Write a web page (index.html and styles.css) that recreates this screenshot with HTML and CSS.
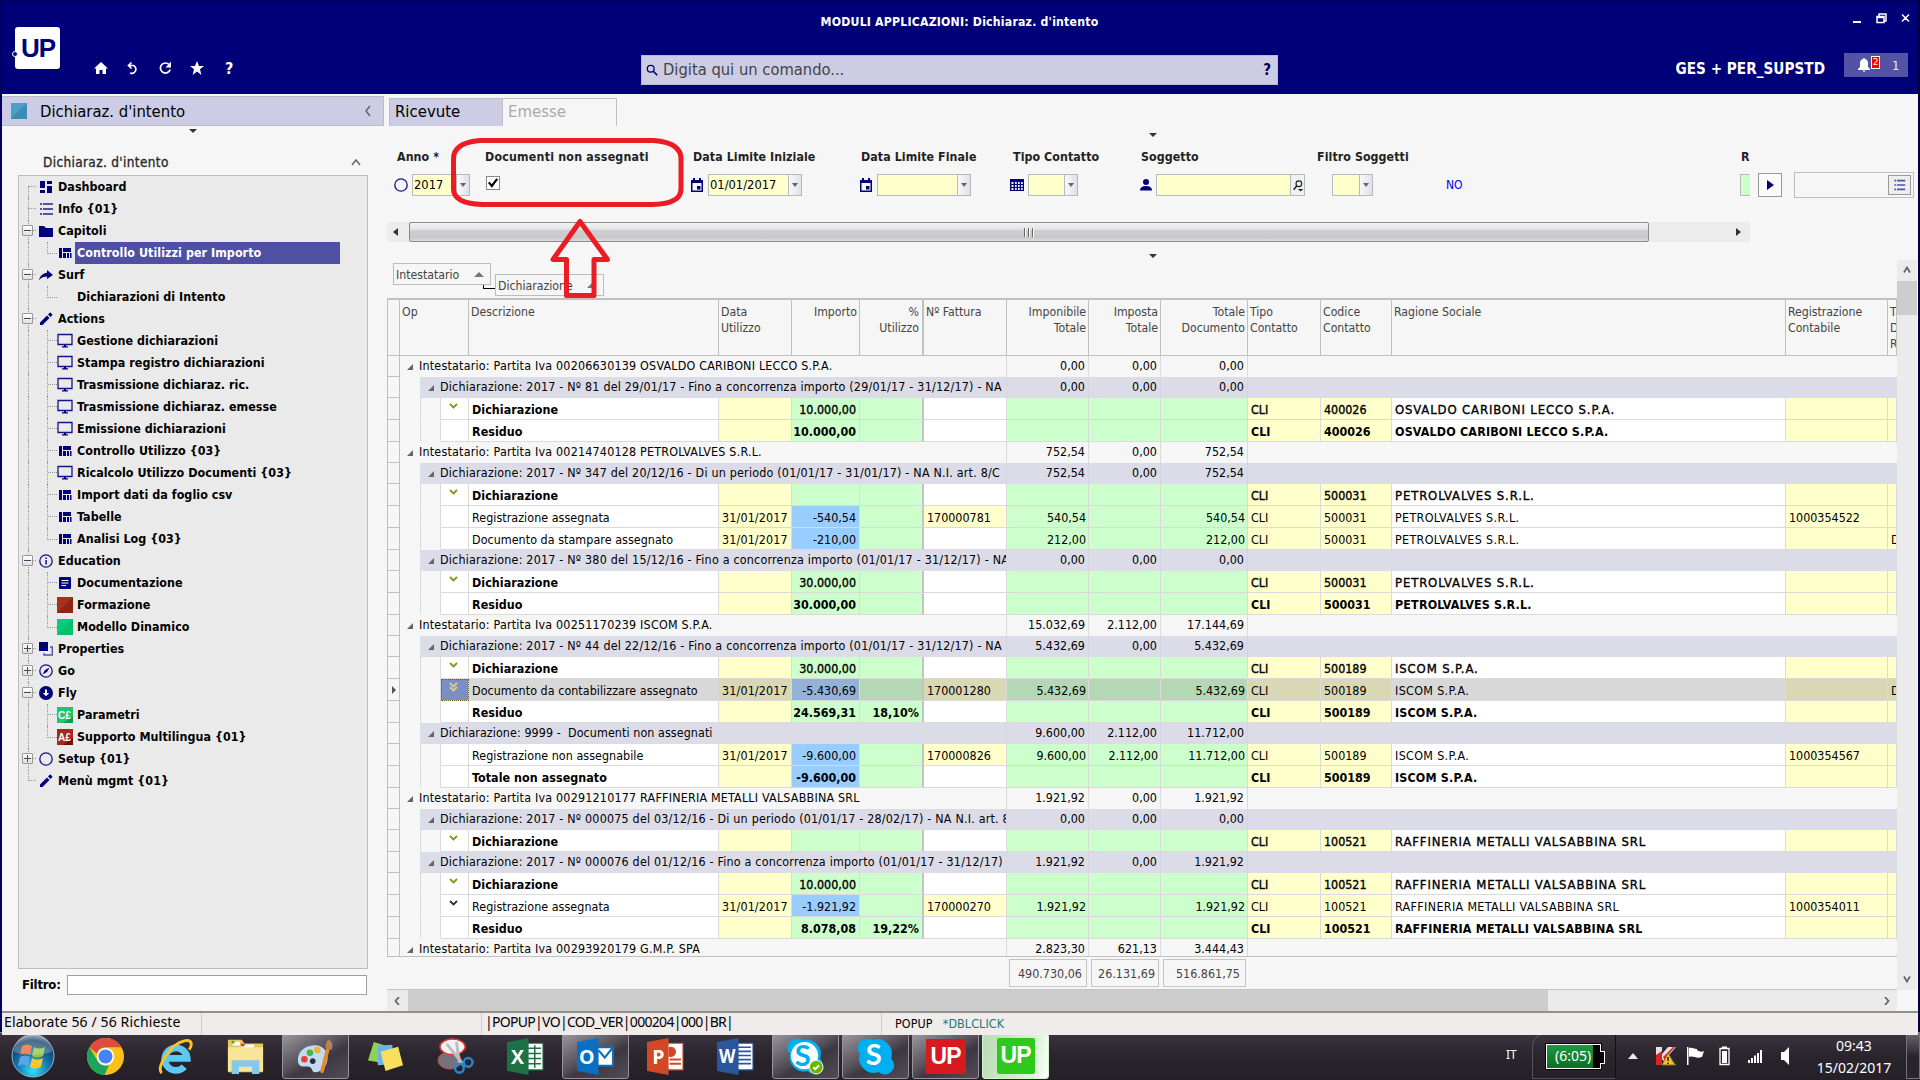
FILE: index.html
```html
<!DOCTYPE html>
<html lang="it">
<head>
<meta charset="utf-8">
<title>MODULI APPLICAZIONI: Dichiaraz. d'intento</title>
<link rel="stylesheet" href="styles.css">
</head>
<body>
<svg class="defs" aria-hidden="true">
  <symbol id="dash" viewBox="0 0 14 14"><path d="M1 1h5v7H1zM1 10h5v3H1zM8 1h5v3H8zM8 6h5v7H8z"/></symbol>
  <symbol id="list" viewBox="0 0 14 14"><path class="soft" d="M1 1h2v2H1zM4 1h10v2H4zM1 6h2v2H1zM4 6h10v2H4zM1 11h2v2H1zM4 11h10v2H4z"/></symbol>
  <symbol id="folder" viewBox="0 0 14 14"><path d="M0 2h5l2 2h7v9H0z"/></symbol>
  <symbol id="grid" viewBox="0 0 14 14"><path d="M1 2h3v10H1zM5 2h8v4H5zM5 7h3v5H5zM9 7h2v5H9zM12 7h1.5v5H12z"/></symbol>
  <symbol id="share" viewBox="0 0 14 14"><path d="M8 2l6 5-6 4V8.500C5 8.500 2 9.500 0 12 1 8 4 5.200 8 4.800z"/></symbol>
  <symbol id="pencil" viewBox="0 0 14 14"><path d="M1 10.500V13h2.500l7-7L8 3.500zM9 2.500L11.500 5l1.700-1.700a.8.8 0 0 0 0-1L11.700.800a.8.8 0 0 0-1 0z"/></symbol>
  <symbol id="screen" viewBox="0 0 16 16"><path fill="none" stroke="#14148a" stroke-width="1.300" d="M1 1.500h14v10H1z"/><path d="M7 12h2v1.500H7zM5 13.200h6V14.500H5z"/></symbol>
  <symbol id="info" viewBox="0 0 14 14"><circle class="ring" cx="7" cy="7" r="6.200"/><path d="M6.400 3.500h1.400V5H6.400zM6.400 6h1.400v4.500H6.400z"/></symbol>
  <symbol id="doc" viewBox="0 0 14 14"><rect x="1" y="1" width="12" height="12" rx="1"/><path stroke="#fff" d="M3.500 4.500h7M3.500 7h7M3.500 9.500h4.500"/></symbol>
  <symbol id="red" viewBox="0 0 16 16"><path fill="#a5331c" d="M0 0h16v16H0z"/><path fill="#8e2411" d="M16 0v16H0z"/></symbol>
  <symbol id="green" viewBox="0 0 16 16"><path fill="#0acb7a" d="M0 0h16v16H0z"/><path fill="#08be6c" d="M16 0v16H0z"/></symbol>
  <symbol id="ce" viewBox="0 0 16 16"><path fill="#27c26b" d="M0 0h16v16H0z"/><path fill="#169c50" d="M16 9v7H6z"/><text class="cur" x="1" y="12">C£</text></symbol>
  <symbol id="ae" viewBox="0 0 16 16"><path fill="#a12b1d" d="M0 0h16v16H0z"/><path fill="#6e1008" d="M16 9v7H6z"/><text class="cur" x="1" y="12">A£</text></symbol>
  <symbol id="props" viewBox="0 0 14 14"><path d="M0 0h9v9H0z"/><path fill="none" stroke="#5353a6" stroke-width="1.400" d="M11 5h2.300v8H5v-2"/></symbol>
  <symbol id="compass" viewBox="0 0 14 14"><circle class="ring" cx="7" cy="7" r="6.200"/><path d="M10.500 3.500L8 8l-4.500 2.500L6 6z"/></symbol>
  <symbol id="fly" viewBox="0 0 14 14"><circle cx="7" cy="7" r="7"/><path fill="#fff" d="M6 3.500h2V7h2.200L7 10.300 3.800 7H6z"/></symbol>
  <symbol id="circle" viewBox="0 0 14 14"><circle class="ring" cx="7" cy="7" r="6.200"/></symbol>
  <symbol id="cal" viewBox="0 0 14 14"><path fill-rule="evenodd" d="M1 2h2V0h2v2h4V0h2v2h2v12H1zM2.500 5v7.500h9V5zM7 8h3.500v3.500H7z"/></symbol>
  <symbol id="table" viewBox="0 0 14 14"><path fill-rule="evenodd" d="M0 1h14v12H0zM1.500 4v2h2V4zM5 4v2h1.700V4zM8 4v2h1.700V4zM11 4v2h1.700V4zM1.500 7v2h2V7zM5 7v2h1.700V7zM8 7v2h1.700V7zM11 7v2h1.700V7zM1.500 10v2h2v-2zM5 10v2h1.700v-2zM8 10v2h1.700v-2zM11 10v2h1.700v-2z"/></symbol>
  <symbol id="user" viewBox="0 0 14 14"><circle cx="7" cy="4" r="3"/><path d="M1 12.500c0-3 2-4.500 6-4.500s6 1.500 6 4.500z"/></symbol>
  <symbol id="lens" viewBox="0 0 14 14"><circle cx="8" cy="5" r="3.300" fill="none" stroke="#222" stroke-width="1.400"/><path stroke="#222" stroke-width="1.800" d="M5.600 7.400L2 12"/><path fill="#222" d="M7 11h6l-3 3z"/></symbol>
</svg>

<div class="app">
  <header class="top">
    <div class="logo">UP<i></i></div>
    <div class="quick">
      <svg viewBox="0 0 14 14"><path d="M7 1l7 6.500h-2V13H8.500V9h-3v4H2V7.500H0z"/></svg>
      <svg viewBox="0 0 14 14"><path class="ln" d="M5.500 1.500L2.500 4.500l3 3M2.500 4.500h5a4 4 0 1 1-3.500 7.500"/></svg>
      <svg viewBox="0 0 14 14"><path class="ln" d="M11 3.500a5 5 0 1 0 1.200 5"/><path d="M13 .5v6H7.500z"/></svg>
      <svg viewBox="0 0 14 14"><path d="M7 0l2 5h5l-4 3.300L11.400 14 7 10.600 2.600 14 4 8.300 0 5h5z"/></svg>
      <b>?</b>
    </div>
    <div class="center">
      <div class="title">MODULI APPLICAZIONI: Dichiaraz. d'intento</div>
      <div class="cmd"><svg viewBox="0 0 14 14"><circle cx="5.500" cy="5.500" r="4" fill="none" stroke="#000066" stroke-width="1.500"/><path stroke="#000066" stroke-width="1.800" d="M8.500 8.500L13 13"/></svg><span>Digita qui un comando...</span><b>?</b></div>
    </div>
    <div class="user">
      <div class="win"><svg viewBox="0 0 58 12"><path fill="#fff" d="M0 8h8v2H0z"/><path class="wl" d="M24 3.500h7v6h-7zM24 4.500h7M26 3V1h7v7h-2M49 1.500l7 7M56 1.500l-7 7"/></svg></div>
      <div class="who"><b>GES + PER_SUPSTD</b><div class="bell"><svg viewBox="0 0 12 14"><path d="M6 0a1 1 0 0 1 1 1c2 .5 3 2 3 4.500V9l2 2v1H0v-1l2-2V5.500C2 3 3 1.500 5 1a1 1 0 0 1 1-1zM4.700 12.500h2.600a1.300 1.300 0 0 1-2.600 0z"/></svg><em>2</em><span>1</span></div></div>
    </div>
  </header>

  <main class="main">
    <aside class="side">
      <div class="sidehead"><i></i><span>Dichiaraz. d'intento</span><svg viewBox="0 0 8 12"><path d="M6 1L2 6l4 5"/></svg></div>
      <div class="notch"></div>
      <div class="treehead"><span>Dichiaraz. d'intento</span><svg viewBox="0 0 10 8"><path d="M1 7l4-5 4 5"/></svg></div>
      <div class="tree" id="tree"></div>
      <div class="filter"><b>Filtro:</b><div></div></div>
    </aside>

    <section class="work">
      <div class="tabs"><div class="on">Ricevute</div><div>Emesse</div></div>
      <div class="upper">
        <div class="tri t1"></div>
        <div class="form">
          <div class="f"><label class="p3">Anno *</label><div class="ctl"><svg class="ic"><use href="#circle"/></svg><div class="inp anno"><span>2017</span><i></i></div></div></div>
          <div class="f"><label class="wide">Documenti non assegnati</label><div class="ctl"><div class="chk"><svg viewBox="0 0 10 10"><path d="M1.500 4.500L4 7.500l4.500-6"/></svg></div></div></div>
          <div class="f"><label class="p3">Data Limite Iniziale</label><div class="ctl"><svg class="ic"><use href="#cal"/></svg><div class="inp date"><span>01/01/2017</span><i></i></div></div></div>
          <div class="f"><label class="p2">Data Limite Finale</label><div class="ctl"><svg class="ic"><use href="#cal"/></svg><div class="inp date"><span></span><i></i></div></div></div>
          <div class="f"><label class="p3">Tipo Contatto</label><div class="ctl"><svg class="ic"><use href="#table"/></svg><div class="inp tipo"><span></span><i></i></div></div></div>
          <div class="f"><label class="p2">Soggetto</label><div class="ctl"><svg class="ic"><use href="#user"/></svg><div class="inp sogg"><span></span><u><svg><use href="#lens"/></svg></u></div></div></div>
          <div class="f"><label>Filtro Soggetti</label><div class="ctl"><div class="inp filt"><span></span><i></i></div></div></div>
          <div class="f"><label></label><div class="ctl no">NO</div></div>
          <div class="f clip"><label class="p1">R</label><div class="ctl"><div class="inp grn"></div></div></div>
          <div class="f"><label></label><div class="ctl"><div class="play"></div></div></div>
          <div class="f"><label></label><div class="ctl"><div class="pick"><div><svg viewBox="0 0 14 14"><use href="#list"/></svg></div></div></div></div>
        </div>
        <div class="hbar"><i class="l"></i><div class="thumb"><s></s></div><i class="r"></i></div>
        <div class="tri t2"></div>
      </div>
      <div class="lower">
        <div class="gridarea">
          <div class="groupby"><div class="gb a">Intestatario<i></i></div><div class="conn"></div><div class="gb b">Dichiarazione<i></i></div></div>
          <div class="tbl" id="tbl"></div>
          <div class="totals"><div class="b1">490.730,06</div><div class="b2">26.131,69</div><div class="b3">516.861,75</div></div>
        </div>
        <div class="vbar"><svg viewBox="0 0 8 8"><path d="M1 6.500l3-5 3 5"/></svg><div></div><svg class="dn" viewBox="0 0 8 8"><path d="M1 1.500l3 5 3-5"/></svg></div>
      </div>
      <div class="hbar2"><div class="bt"><svg viewBox="0 0 8 8"><path d="M6 0L2.500 4 6 8"/></svg></div><div class="th"></div><div class="tr"><svg viewBox="0 0 8 8"><path d="M2 0l3.500 4L2 8"/></svg></div></div>
    </section>
  </main>

  <footer class="status"><div class="s1">Elaborate 56 / 56 Richieste</div><div class="s2"></div><div class="s3">|POPUP|VO|COD_VER|000204|000|BR|</div><div class="s4"><span>POPUP</span><span class="teal">*DBLCLICK</span></div></footer>

  <svg class="marks" viewBox="0 0 240 170"><path d="M33 5.500H207Q234 7.500 234 24V54Q234 69 205 69.500H35Q6.500 68.500 6.500 54V24Q6.500 7.500 33 5.500ZM133 86.500L106 124.500H119.500V160.500H147V124.500H160.500Z"/></svg>
</div>

<div class="task">
  <div class="slot orb"><svg viewBox="0 0 44 44"><defs><radialGradient id="og" cx=".5" cy=".85" r=".9"><stop offset="0" stop-color="#2ee0ff"/><stop offset=".45" stop-color="#1570a8"/><stop offset=".8" stop-color="#123a62"/><stop offset="1" stop-color="#9db4c8"/></radialGradient></defs><circle cx="22" cy="22" r="21" fill="url(#og)" stroke="#86b9d6"/><path fill="#e8622a" d="M11 12q5-3 10 0l-2 9q-5-3-10 0z"/><path fill="#8cc63c" d="M23 13q5 3 11 0l-2 9q-6 3-11 0z"/><path fill="#5aa5e8" d="M9 23q5-3 10 0l-2 9q-5-3-10 0z"/><path fill="#fbc52c" d="M21 24q5 3 11 0l-2 9q-6 3-11 0z"/><path fill="#fff" opacity=".25" d="M3 18a19 19 0 0 1 38 0q-19 6-38 0z"/></svg></div>
  <div class="slot"><svg viewBox="0 0 36 36"><circle cx="18" cy="18" r="18" fill="#fbc117"/><path fill="#de4b3f" d="M2.400 9A18 18 0 0 1 33.600 9H18a9 9 0 0 0-8.500 6z"/><path fill="#1ca45c" d="M2.400 9l8 13.500a9 9 0 0 0 11 4L17 36A18 18 0 0 1 2.400 9z"/><circle cx="18" cy="18" r="8.500" fill="#fff"/><circle cx="18" cy="18" r="6.800" fill="#4285f4"/></svg></div>
  <div class="slot"><svg viewBox="0 0 38 38"><path fill="none" stroke="#5cc8f4" stroke-width="7" d="M9 21h22a11.500 11.500 0 1 0-3 8.500"/><path fill="none" stroke="#f6c428" stroke-width="3" d="M5 36C-2 31 14 6 28 3c9-2 8 5 5 9"/></svg></div>
  <div class="slot"><svg viewBox="0 0 40 38"><path fill="#e9c75c" d="M1 1h15l3 4h20v31H1z"/><path fill="#fff" d="M6 3h8v4H6zM15 6h14v4H15z"/><path fill="#3fae49" d="M5 2h3v3H5z"/><path fill="#e0442e" d="M15 5h4v3h-4z"/><path fill="#f8e598" d="M1 9h38v26H1z"/><path fill="#86c8e8" d="M5 23h30v15h-8v-8H13v8H5z"/></svg></div>
  <div class="slot act"><svg viewBox="0 0 40 38"><path fill="#bfdcf0" d="M17 7c12-1 17 8 16 15-1 8-6 14-14 14-3 0-2-5-6-6S1 32 1 23 7 8 17 7z"/><circle cx="8" cy="22" r="3.500" fill="#e6402e"/><circle cx="14" cy="15" r="3.500" fill="#4bb14b"/><circle cx="22" cy="12" r="3.500" fill="#f3b32a"/><circle cx="17" cy="24" r="3" fill="#332c3a"/><path stroke="#e58a2c" stroke-width="4" stroke-linecap="round" d="M33 12l-6 23"/><path fill="#b98252" d="M31 10C30 4 34 2 33 0c5 2 7 7 4 12z"/></svg></div>
  <div class="slot"><svg viewBox="0 0 38 32"><path fill="#8fd05a" d="M7 1l16 5-5 17-17-3z"/><path fill="#6fb3e4" d="M11 5l15-1 1 20-16 1z"/><path fill="#f9e05c" d="M14 11l18-5 5 19-18 6z"/></svg></div>
  <div class="slot"><svg viewBox="0 0 38 38"><ellipse cx="13" cy="23" rx="12" ry="9" fill="#77727a" stroke="#b44" /><ellipse cx="16" cy="9" rx="13" ry="8" fill="#f2f2f2" stroke="#d33" stroke-width="1.500"/><path stroke="#b9bec4" stroke-width="3" d="M10 6l16 20M20 4l3 22"/><circle cx="23" cy="31" r="4.500" class="ring2"/><circle cx="32" cy="25" r="4.500" class="ring2"/></svg></div>
  <div class="slot"><svg viewBox="0 0 36 36"><path fill="#fff" stroke="#1e7145" d="M19 5h16v26H19z"/><path stroke="#1e7145" stroke-width="1.500" d="M20 10h13M20 15h13M20 20h13M20 25h13M27 7v22"/><path fill="#1e7145" d="M0 4l21-4v36L0 32z"/><text class="off" x="4" y="25">X</text></svg></div>
  <div class="slot act"><svg viewBox="0 0 36 36"><path fill="#fff" stroke="#0a6ec2" stroke-width="2" d="M19 9h16v18H19z"/><path fill="none" stroke="#0a6ec2" stroke-width="2" d="M21 12l6 7 8-10"/><path fill="#0a6ec2" d="M0 4l21-4v36L0 32z"/><text class="off" x="2" y="25">O</text></svg></div>
  <div class="slot"><svg viewBox="0 0 36 36"><path fill="#fff" stroke="#d24726" d="M19 5h16v26H19z"/><path stroke="#d24726" stroke-width="2" d="M22 21h11M22 25h11"/><path fill="#d24726" d="M21 9a5 5 0 1 1 0 9z"/><path fill="#d24726" d="M0 4l21-4v36L0 32z"/><text class="off" x="5" y="25">P</text></svg></div>
  <div class="slot"><svg viewBox="0 0 36 36"><path fill="#fff" stroke="#2b579a" d="M19 5h16v26H19z"/><path stroke="#2b579a" stroke-width="1.600" d="M20 9h13M20 13h13M20 17h13M20 21h13M20 25h13"/><path fill="#2b579a" d="M0 4l21-4v36L0 32z"/><text class="off" x="2" y="24" textLength="16" lengthAdjust="spacingAndGlyphs">W</text></svg></div>
  <div class="slot act"><svg viewBox="0 0 38 38"><path class="sk" fill="#00aff0" d="M10 1a9 9 0 0 1 6 1A15 15 0 0 1 34 21a9 9 0 0 1-13 13A15 15 0 0 1 3 16 9 9 0 0 1 10 1z"/><circle cx="18" cy="18" r="14" fill="#fff"/><text class="skc" x="8" y="29">S</text><circle cx="30" cy="30" r="7" fill="#6bb700" stroke="#fff"/><path fill="none" stroke="#fff" stroke-width="2" d="M27 30l2 2 4-4"/></svg></div>
  <div class="slot act"><svg viewBox="0 0 38 38"><path fill="#00aff0" d="M10 1a9 9 0 0 1 6 1A15 15 0 0 1 35 21a9 9 0 0 1-13 14A15 15 0 0 1 3 16 9 9 0 0 1 10 1z"/><text class="skw" x="9" y="28">S</text></svg></div>
  <div class="slot act"><div class="up r">UP</div></div>
  <div class="slot act lit"><div class="up g">UP</div></div>
  <div class="tray">
    <span class="it">IT</span>
    <div class="batbox"><div class="bat">(6:05)</div></div>
    <svg class="trayic" viewBox="1620 1040 180 34">
      <path fill="#e8e8f4" d="M1628 1060l5-6 5 6z"/>
      <path fill="#e8e0e0" d="M1656 1048h6v7l6-7h8l-8 9 8 9h-9l-5-6v6h-6z"/><path fill="#d22" d="M1656 1056l6-4v14h-6zM1663 1058l10-10h2l-9 10 7 8h-6z"/><path fill="#f4c332" stroke="#8a6a10" d="M1668 1054l7 12h-13z"/><path stroke="#222" stroke-width="1.500" d="M1668 1058v4M1668 1063.500v1.500"/>
      <path fill="#fff" d="M1687 1048h1.500v18h-1.500zM1689 1049c4-1 5 1 8 1v1c3 2 5 2 7 1l-2 6c-3 1-5 1-7 0-2 0-3-1-6 0z"/>
      <path fill="none" stroke="#fff" stroke-width="1.300" d="M1720 1049.500h9v16h-9z"/><path fill="#fff" d="M1722 1047.500h5v2h-5zM1722 1052h5v12h-5z"/>
      <path fill="#fff" d="M1748 1061h2v3h-2zM1751 1059h2v5h-2zM1754 1056.500h2v7.500h-2zM1757 1054h2v10h-2zM1760 1051h2v13h-2z"/>
      <path fill="#fff" d="M1781 1053h3l5-5v18l-5-5h-3z"/>
    </svg>
    <div class="clock"><span>09:43</span><span>15/02/2017</span></div>
    <div class="desk"></div>
  </div>
</div>
<script src="app.js"></script>
</body>
</html>
```
FILE: styles.css
```css
* { box-sizing: border-box; }
body { margin: 0; width: 1920px; height: 1080px; overflow: hidden; font: 12.4px "DejaVu Sans Condensed", "DejaVu Sans", sans-serif; font-stretch: condensed; color: #000; background: #f6f6f6; }
svg { display: block; fill: #000078; }
.defs { position: absolute; width: 0; height: 0; }
.soft { fill: #5353a6; }
.ring { fill: none; stroke: #14148a; stroke-width: 1.3; }
.cur { font: bold 10px "Liberation Sans", sans-serif; fill: #fff; }
.app { position: relative; display: flex; flex-direction: column; width: 1920px; height: 1032px; border-left: 2px solid #000060; border-right: 2px solid #000040; border-bottom: 2px solid #000060; }

/* top bar */
.top { height: 94px; flex: none; display: flex; background: #000078; border-top: 2px solid #000060; color: #fff; }
.top svg { fill: #fff; }
.logo { position: relative; margin: 25px 0 0 13px; width: 45px; height: 42px; border-radius: 3px; background: #fff; color: #000078; font: bold 26px/42px "Liberation Sans", sans-serif; letter-spacing: -1px; padding-left: 6px; }
.logo i { position: absolute; left: -3px; top: 24px; width: 6px; height: 6px; border-radius: 50%; background: #000078; border: 1.5px solid #fff; }
.quick { display: flex; align-items: center; gap: 18px; margin: 59px 0 0 34px; width: 145px; height: 14px; }
.quick svg { width: 14px; height: 14px; flex: none; }
.quick b { font-size: 16px; margin-left: 3px; }
.ln { fill: none; stroke: #fff; stroke-width: 1.7; }
.center { margin-left: 402px; width: 637px; display: flex; flex-direction: column; align-items: center; }
.title { margin-top: 11px; height: 18px; font-weight: bold; font-size: 12.2px; line-height: 18px; white-space: nowrap; letter-spacing: .2px; }
.cmd { margin-top: 24px; width: 637px; height: 30px; background: #cccce4; border: 1px solid #b8b8d8; color: #444; display: flex; align-items: center; font-size: 16.4px; line-height: 26px; padding: 0 6px 0 4px; }
.cmd svg { width: 12px; height: 12px; margin-right: 5px; }
.cmd b { margin-left: auto; color: #000050; font-size: 15px; }
.user { flex: 1; display: flex; flex-direction: column; align-items: flex-end; padding-right: 10px; }
.win { margin: 11px -3px 0 0; }
.win svg { width: 58px; height: 12px; }
.wl { fill: none; stroke: #fff; stroke-width: 1.5; }
.who { display: flex; align-items: center; gap: 19px; margin-top: 28px; font-size: 15.2px; height: 24px; }
.who > b { padding-top: 7px; }
.bell { width: 64px; height: 24px; background: #5353a6; display: flex; align-items: center; padding-left: 14px; font-size: 13px; }
.bell svg { width: 12px; height: 14px; }
.bell em { font: 9px/11px "DejaVu Sans", sans-serif; width: 9px; height: 13px; margin: -6px 0 0 1px; text-align: center; background: #f00; border: 1px solid #fff; }
.bell span { margin-left: 12px; color: #e8e8ff; }

/* side panel */
.main { height: 917px; flex: none; display: flex; background: #f6f6f6; }
.side { width: 385px; flex: none; display: flex; flex-direction: column; }
.sidehead { margin-top: 2px; width: 382px; height: 30px; background: #cccce4; border: 1px solid #bcbcc4; border-left: 0; display: flex; align-items: center; font-size: 16.5px; padding: 0 11px 0 9px; }
.sidehead i { width: 16px; height: 16px; background: linear-gradient(135deg, #4aa0c8 50%, #3c8cb8 50%); margin-right: 13px; }
.sidehead svg { width: 8px; height: 12px; margin-left: auto; }
.sidehead path, .treehead path { fill: none; stroke: #666; stroke-width: 1.5; }
.notch, .tri { border: 4px solid transparent; border-top-color: #333; border-bottom: 0; width: 8px; height: 4px; }
.notch { margin: 3px 0 0 187px; }
.treehead { margin: 19px 0 0 41px; height: 20px; display: flex; align-items: center; width: 318px; font-size: 13.5px; color: #222; -webkit-text-stroke: .3px #333; justify-content: space-between; letter-spacing: .35px; }
.treehead svg { width: 10px; height: 8px; }
.tree { margin: 3px 0 0 16px; width: 350px; height: 794px; background: #eaeaea; border: 1px solid #bcbcbc; }
.node { position: relative; height: 22px; display: flex; align-items: center; font-weight: bold; font-size: 12.4px; white-space: nowrap; letter-spacing: .05px; }
.node svg { width: 14px; height: 14px; flex: none; }
.node.l1 { padding-left: 20px; }
.node.l1 span { margin-left: 4px; }
.node.l2 { padding-left: 38px; }
.node.l2 svg { width: 16px; height: 16px; }
.node.l2 svg.sm { width: 14px; height: 14px; margin: 0 1px; }
.node span { padding: 0 1px; line-height: 22px; }
.node.l2 span { margin-left: 3px; }
.node.sel span { background: #4f4fa3; color: #fff; width: 265px; margin-left: 2px; padding-left: 2px; }
.node::before { content: ""; position: absolute; left: 9px; top: 0; width: 0; height: 22px; border-left: 1px dotted #999; }
.node.first::before { top: 10px; height: 12px; }
.node.end::before { height: 11px; }
.node.l1::after { content: ""; position: absolute; left: 9px; top: 10px; width: 8px; border-top: 1px dotted #999; }
.node.l2::after { content: ""; position: absolute; left: 28px; top: 0; width: 9px; height: 11px; border-left: 1px dotted #999; border-bottom: 1px dotted #999; }
.node.l2.more::after { height: 22px; border-bottom: 0; background: repeating-linear-gradient(90deg, #999 0 1px, transparent 1px 2px) 0 10px / 9px 1px no-repeat; }
.node i { position: absolute; z-index: 1; left: 3px; top: 5px; width: 11px; height: 11px; border: 1px solid #999; border-radius: 1px; background: linear-gradient(#446, #446) 50% 50% / 7px 1px no-repeat, linear-gradient(#fff, #e0e0e0); }
.node i.plus { background: linear-gradient(#446, #446) 50% 50% / 7px 1px no-repeat, linear-gradient(#446, #446) 50% 50% / 1px 7px no-repeat, linear-gradient(#fff, #e0e0e0); }
.filter { margin: 5px 0 0 20px; display: flex; align-items: center; height: 21px; font-size: 13px; }
.filter b { width: 45px; white-space: nowrap; letter-spacing: -.2px; }
.filter div { width: 300px; height: 20px; background: #fff; border: 1px solid #a0a0a0; }

/* work area */
.work { flex: 1; display: flex; flex-direction: column; min-width: 0; }
.tabs { display: flex; height: 32px; padding: 4px 0 0 2px; font-size: 16.6px; }
.tabs div { width: 115px; height: 28px; border: 1px solid #c0c0c0; border-bottom: 0; padding: 0 5px; line-height: 26px; color: #aaa; }
.tabs .on { width: 114px; margin-right: -1px; background: #cccce4; color: #000; }
.upper { height: 134px; flex: none; }
.tri { margin-left: 762px; }
.t1 { margin-top: 7px; }
.form { margin: 10px 0 0 7px; height: 62px; display: grid; grid-template-columns: 91px 205px 169px 151px 129px 178px 129px 294px 18px 36px 120px; }
.f label { display: block; height: 25px; line-height: 17px; padding-top: 2px; font-weight: bold; font-size: 12.3px; color: #222; white-space: nowrap; letter-spacing: .08px; }
.f label.wide { letter-spacing: .22px; }
.p1 { padding-left: 1px; } .p2 { padding-left: 2px; } .p3 { padding-left: 3px; }
.clip { width: 10px; overflow: hidden; }
.ctl { display: flex; align-items: center; height: 26px; }
.ic { width: 14px; height: 14px; margin-right: 4px; flex: none; }
.inp { height: 22px; display: flex; background: #ffffcc; border: 1px solid #b8b8b8; }
.inp span { flex: 1; padding-left: 1px; line-height: 20px; font-size: 12.8px; }
.inp i { width: 13px; border-left: 1px solid #b8b8b8; background: linear-gradient(90deg, #f8f8fb, #dde2ea); display: grid; place-items: center; }
.inp i::after { content: ""; border: 3px solid transparent; border-top: 4px solid #666; border-bottom: 0; }
.inp u { width: 14px; border-left: 1px solid #b8b8b8; background: #eef0f4; display: grid; place-items: center; }
.inp u svg { width: 12px; height: 15px; }
.anno { width: 58px; } .date { width: 94px; } .tipo { width: 50px; } .sogg { width: 149px; margin-left: -1px; } .filt { width: 41px; margin-left: 15px; }
.grn { width: 40px; background: #ccffcc; flex: none; }
.chk { width: 14px; height: 14px; margin: -4px 0 0 1px; background: #fff; border: 1px solid #888; }
.chk path { fill: none; stroke: #000; stroke-width: 1.8; }
.no { color: #0000ff; font-size: 12px; }
.play { width: 24px; height: 24px; border: 1px solid #999; background: #fafafa; display: grid; place-items: center; }
.play::after { content: ""; border: 5px solid transparent; border-left: 7px solid #000078; border-right: 0; }
.pick { width: 120px; height: 26px; border: 1px solid #c0c0c0; display: flex; justify-content: flex-end; padding: 2px; }
.pick div { width: 23px; height: 20px; border: 1px solid #999; background: #eee; display: grid; place-items: center; }
.pick svg { width: 13px; height: 12px; }
.hbar { margin-top: 13px; width: 1363px; height: 20px; background: #ececec; display: flex; align-items: center; }
.hbar i { border: 4px solid transparent; }
.hbar .l { margin: 0 11px 0 2px; border-right: 5px solid #333; }
.hbar .r { margin-left: 87px; border-left: 5px solid #333; }
.thumb { width: 1240px; height: 20px; border: 1px solid #8c8c8c; border-radius: 2px; background: linear-gradient(#f2f2f2, #e4e4e4 35%, #d0d0d4 40%, #c8c8cc 80%, #dcdcdc); display: grid; place-items: center; }
.thumb s { width: 11px; height: 9px; background: repeating-linear-gradient(90deg, #666 0 1px, #fff 1px 2px, transparent 2px 4px); }
.t2 { margin-top: 12px; }
.lower { height: 729px; flex: none; display: flex; }
.gridarea { width: 1510px; flex: none; }
.groupby { height: 38px; display: flex; padding-left: 6px; color: #444; font-size: 12.2px; }
.gb { height: 22px; border: 1px solid #bbb; display: flex; align-items: center; justify-content: space-between; padding: 1px 6px 0 2px; }
.gb i { border: 5px solid transparent; border-bottom: 5px solid #777; border-top: 0; }
.a { width: 98px; margin-top: 3px; }
.b { width: 109px; margin-top: 14px; }
.conn { width: 12px; height: 4px; margin: 25px 0 0 -8px; border-left: 1px solid #000; border-bottom: 1px solid #000; }

/* data grid */
.tbl { width: 1510px; height: 659px; overflow: hidden; border-top: 2px solid #c0c0c0; border-bottom: 1px solid #c0c0c0; }
.row { display: grid; grid-template-columns: 13px 20px 21px 28px 250px 73px 68px 64px 83px 82px 72px 87px 73px 71px 394px 102px 9px; height: 22px; line-height: 24px; white-space: nowrap; }
.row > div { overflow: hidden; border-right: 1px solid #dadada; border-bottom: 1px solid #dadada; padding: 0 2px 0 3px; min-width: 0; }
.row > .ind { border-left: 1px solid #c0c0c0; border-right-color: #c0c0c0; border-bottom-color: #c0c0c0; background: #f6f6f6; padding: 0; display: grid; place-items: center; }
.row > .pad { background: #f6f6f6; border-bottom-color: #f6f6f6; border-right-color: #f6f6f6; }
.row > .pad + .pad { border-left: 1px solid #dadada; border-right-color: #dadada; }
.row > .pct { border-right: 2px solid #c4c4c4; padding-right: 3px; }
.row > .num { text-align: right; }
.row > .imp { padding: 0 3px 0 0; }
.row.hd { height: 56px; line-height: 16px; color: #444; font-size: 12.2px; }
.row.hd > div { border-color: #c0c0c0; padding: 4px 2px 0; white-space: pre; }
.row.hd > .op { grid-column: 2 / 5; }
.row.hd > .pct { padding-right: 3px; }
.row.g1, .row.g2 { height: 21px; line-height: 20px; }
.row.g1 > div, .row.g2 > div { border-bottom-color: transparent; }
.row.g1 > .ind, .row.g2 > .ind { border-bottom-color: #c0c0c0; }
.row > .cap { padding-right: 0; }
.row.g1 > .cap { grid-column: 2 / 10; padding-left: 7px; letter-spacing: .21px; }
.row.g2 > .cap { grid-column: 3 / 10; padding-left: 8px; background: #dcdce8; border-right-color: #d6d6e2; letter-spacing: .21px; }
.row.g2 > .cap.few { letter-spacing: .08px; }
.row.g2 > .sum { background: #dcdce8; border-right-color: #d4d4e0; }
.row > .rest { grid-column: 13 / 18; border-right: 0; }
.g2 .rest { background: #dcdce8; }
.row.g2 > .pad { border-right: 0; }
.cap::before { content: ""; display: inline-block; border-left: 6px solid transparent; border-bottom: 6px solid #666; margin-right: 6px; }
.row > .sum { text-align: right; letter-spacing: .03px; padding-right: 3px; }
.row > .w { background: #fff; } .row > .y { background: #ffffcc; } .row > .g { background: #ccffcc; } .row > .bl { background: #99ccff; }
.row > .ds { letter-spacing: .05px; }
.row > .dt { letter-spacing: .15px; }
.row > .rs { letter-spacing: .35px; }
.bold { font-weight: bold; }
.semi > div { -webkit-text-stroke: .35px #000; }
.semi > .ds { -webkit-text-stroke: 0; font-weight: bold; }
.row.semi > .rs { letter-spacing: .85px; font-size: 13px; }
.semi > .imp { font-size: 12.4px; }
.row.bold > .rs { letter-spacing: .17px; }
.row > .opc { padding: 0; }
.opc svg { width: 9px; height: 6px; margin: 5px auto 0; position: relative; left: -1px; fill: none; stroke: #8f8f1e; stroke-width: 1.8; overflow: visible; }
.opc.dark svg { stroke: #333; }
.row.hl > .w { background: #d8d8d8; } .row.hl > .y { background: #d8d8b4; } .row.hl > .g { background: #b4d8b4; } .row.hl > .bl { background: #92b2d8; }
.row.hl > .opc { background: #7b8fc4; outline: 1px dotted #66602a; outline-offset: -1px; }
.hl .opc svg { stroke: #d8cf90; margin-top: 7px; }
.hl .ind::after { content: ""; border: 4px solid transparent; border-left: 4px solid #555; border-right: 0; }
.totals { display: flex; padding: 2px 0 0 622px; gap: 4px; }
.totals div { height: 28px; border: 1px solid #c4c4c4; text-align: right; line-height: 27px; padding-right: 5px; color: #444; letter-spacing: .03px; }
.totals .b1 { width: 78px; padding-right: 4px; } .totals .b2 { width: 68px; padding: 0 3px 0 0; } .totals .b3 { width: 83px; }
.vbar { width: 20px; background: #ebebeb; height: 730px; display: flex; flex-direction: column; align-items: center; }
.vbar svg { width: 8px; height: 8px; margin: 6px 0 7px; }
.vbar path, .hbar2 path { fill: none; stroke: #666; stroke-width: 1.8; }
.vbar div { width: 20px; height: 34px; background: #cdcdcd; }
.vbar .dn { margin-top: auto; }
.hbar2 { height: 22px; display: flex; width: 1510px; border-top: 1px solid #c4c4c4; }
.hbar2 div { display: flex; align-items: center; }
.hbar2 svg { width: 8px; height: 8px; }
.bt { width: 21px; background: #ebebeb; justify-content: center; padding-right: 2px; }
.th { width: 1140px; background: #cdcdcd; }
.tr { flex: 1; background: #ebebeb; justify-content: flex-end; padding-right: 6px; }

/* status bar */
.status { flex: 1; display: flex; border-top: 2px solid #909090; background: #f0eceb; font-size: 14px; line-height: 17px; white-space: nowrap; font-family: "Noto Sans", sans-serif; }
.status div { border-right: 1px solid #ccc; padding-left: 2px; overflow: hidden; letter-spacing: .12px; }
.s1 { width: 200px; } .s2 { width: 280px; } .s3 { width: 400px; } .s4 { flex: 1; display: flex; gap: 10px; }
.status .s3 { padding-left: 3px; letter-spacing: -.7px; }
.status .s4 { padding-left: 13px; border: 0; font: 12.4px/22px "DejaVu Sans Condensed", sans-serif; }
.teal { color: #1a7a76; }

/* drawn annotation */
.marks { position: absolute; left: 445px; top: 135px; width: 240px; height: 170px; }
.marks path { fill: none; stroke: #ed1c24; stroke-width: 5; stroke-linejoin: round; }

/* task bar */
.task { height: 48px; display: flex; background: linear-gradient(#7a7a80 0 1px, #3b343e 2px, #2a242d 50%, #251f28); color: #fff; font-family: "Noto Sans", sans-serif; }
.slot { width: 67px; margin: 1px 1px 1px 2px; height: 46px; display: grid; place-items: center; flex: none; border-radius: 3px; }
.slot svg { width: 37px; height: 37px; }
.slot.orb { margin: 1px 4px 1px 0; width: 66px; }
.slot.orb svg { width: 44px; height: 44px; }
.act { border: 1px solid #98949c; background: linear-gradient(150deg, #9a979e, #57525b 45%, #3d3741 60%, #524c56); }
.lit { border-color: #d6f5d0; background: linear-gradient(100deg, #b8dcb4, #e2f4de 80%, #fff); }
.off { font: bold 19px "Open Sans", sans-serif; fill: #fff; }
.skc, .skw { font: bold 30px "Lato", sans-serif; fill: #00aff0; }
.skw { fill: #fff; }
.ring2 { fill: none; stroke: #2a86d2; stroke-width: 2.5; }
.up { font: bold 23px/35px "Liberation Sans", sans-serif; text-align: center; letter-spacing: -1px; }
.up.r { width: 40px; height: 35px; background: #d71920; }
.up.g { width: 38px; height: 36px; background: #2fc81c; border-radius: 2px; }
.tray { margin-left: auto; display: flex; align-items: center; }
.it { font-size: 12px; width: 26px; margin-top: -4px; }
.batbox { width: 84px; height: 46px; border: 1px solid #58525c; border-right-color: #111; border-radius: 14px 0 0 0; padding: 10px 0 0 13px; }
.bat { position: relative; width: 55px; height: 25px; border: 1px solid #fff; outline: 1px solid #000; background: linear-gradient(90deg, transparent 46px, #000 46px), linear-gradient(#1f9a40, #0a6e28); font-size: 14px; line-height: 22px; padding-left: 8px; }
.bat::after { content: ""; position: absolute; left: 53px; top: 6px; width: 4px; height: 11px; background: #000; border: 1px solid #fff; border-left: 0; }
.trayic { width: 180px; height: 34px; margin-left: 4px; }
.clock { width: 108px; display: flex; flex-direction: column; text-align: center; font-size: 14px; line-height: 22px; margin-top: 2px; }
.desk { width: 14px; height: 46px; margin-left: -2px; border: 1px solid #77727a; background: linear-gradient(#6a656d, #2a242d 50%); }
```
FILE: app.js
```js
// Menu tree: level, icon, label, flag (+ collapsed, - expanded)
const nodes = [
  [1,'dash','Dashboard'],[1,'list','Info {01}'],[1,'folder','Capitoli','-'],[2,'grid','Controllo Utilizzi per Importo'],
  [1,'share','Surf','-'],[2,'','Dichiarazioni di Intento'],[1,'pencil','Actions','-'],
  [2,'screen','Gestione dichiarazioni'],[2,'screen','Stampa registro dichiarazioni'],[2,'screen','Trasmissione dichiaraz. ric.'],
  [2,'screen','Trasmissione dichiaraz. emesse'],[2,'screen','Emissione dichiarazioni'],[2,'grid','Controllo Utilizzo {03}'],
  [2,'screen','Ricalcolo Utilizzo Documenti {03}'],[2,'grid','Import dati da foglio csv'],[2,'grid','Tabelle'],[2,'grid','Analisi Log {03}'],
  [1,'info','Education','-'],[2,'doc','Documentazione'],[2,'red','Formazione'],[2,'green','Modello Dinamico'],
  [1,'props','Properties','+'],[1,'compass','Go','+'],[1,'fly','Fly','-'],[2,'ce','Parametri'],[2,'ae','Supporto Multilingua {01}'],
  [1,'circle','Setup {01}','+'],[1,'pencil','Menù mgmt {01}']
];
document.getElementById('tree').innerHTML = nodes.map(([lv, icon, text, flag], i) => {
  const next = nodes[i + 1];
  const cls = ['node', 'l' + lv];
  if (i === 0) cls.push('first');
  if (!next) cls.push('end');
  if (i === 3) cls.push('sel');
  if (lv === 2 && next && next[0] === 2) cls.push('more');
  const box = flag ? `<i class="${flag === '+' ? 'plus' : ''}"></i>` : '';
  const small = icon === 'grid' || icon === 'doc' ? 'sm' : '';
  return `<div class="${cls.join(' ')}">${box}<svg class="${small}">${icon ? `<use href="#${icon}"/>` : ''}</svg><span>${text}</span></div>`;
}).join('');

const G1 = (text, a, b, c) => `<div class="row g1"><div class="ind"></div><div class="cap">Intestatario: Partita Iva ${text}</div><div class="sum">${a}</div><div class="sum">${b}</div><div class="sum">${c}</div><div class="rest"></div></div>`;
const G2 = (text, a, b, c) => `<div class="row g2"><div class="ind"></div><div class="pad"></div><div class="cap ${text.length < 50 ? 'few' : ''}">Dichiarazione: ${text}</div><div class="sum">${a}</div><div class="sum">${b}</div><div class="sum">${c}</div><div class="rest"></div></div>`;
// Detail row; o holds the optional cell values
const D = (kind, mark, desc, code, name, o = {}) => {
  const v = k => o[k] || '';
  const arrow = mark ? `<svg viewBox="0 0 9 6"><path d="M1 1l3.500 3.500L8 1${mark === 'two' ? 'M1 -3l3.500 3.500L8 -3' : ''}"/></svg>` : '';
  return `<div class="row ${kind}"><div class="ind"></div><div class="pad"></div><div class="pad"></div>` +
    `<div class="w opc ${mark === 'dark' ? 'dark' : ''}">${arrow}</div><div class="w ds">${desc}</div><div class="y dt">${v('d')}</div>` +
    `<div class="${v('i').startsWith('-') ? 'bl' : 'g'} num imp">${v('i')}</div><div class="g num pct">${v('p')}</div>` +
    `<div class="${o.n ? 'y' : 'w'}">${v('n')}</div><div class="g num">${v('a')}</div><div class="g num">${v('b')}</div><div class="g num">${v('c')}</div>` +
    `<div class="y">CLI</div><div class="y">${code}</div><div class="w rs">${name}</div><div class="y">${v('r')}</div><div class="y">${v('t')}</div></div>`;
};
const J = '31/01/2017', OS = 'OSVALDO CARIBONI LECCO S.P.A.', PE = 'PETROLVALVES S.R.L.', IS = 'ISCOM S.P.A.', RA = 'RAFFINERIA METALLI VALSABBINA SRL';
const head = `<div class="row hd"><div class="ind"></div><div class="op">Op</div><div>Descrizione</div><div>Data
Utilizzo</div><div class="num">Importo</div><div class="num pct">%
Utilizzo</div><div>Nº Fattura</div><div class="num">Imponibile
Totale</div><div class="num">Imposta
Totale</div><div class="num">Totale
Documento</div><div>Tipo
Contatto</div><div>Codice
Contatto</div><div>Ragione Sociale</div><div>Registrazione
Contabile</div><div>T
D
R</div></div>`;
document.getElementById('tbl').innerHTML = [
  head,
  G1('00206630139 ' + OS, '0,00', '0,00', '0,00'),
  G2('2017 - Nº 81 del 29/01/17 - Fino a concorrenza importo (29/01/17 - 31/12/17) - NA', '0,00', '0,00', '0,00'),
  D('semi', 'y', 'Dichiarazione', '400026', OS, { i: '10.000,00' }),
  D('bold', '', 'Residuo', '400026', OS, { i: '10.000,00' }),
  G1('00214740128 PETROLVALVES S.R.L.', '752,54', '0,00', '752,54'),
  G2('2017 - Nº 347 del 20/12/16 - Di un periodo (01/01/17 - 31/01/17) - NA N.I. art. 8/C', '752,54', '0,00', '752,54'),
  D('semi', 'y', 'Dichiarazione', '500031', PE),
  D('', '', 'Registrazione assegnata', '500031', PE, { d: J, i: '-540,54', n: '170000781', a: '540,54', c: '540,54', r: '1000354522' }),
  D('', '', 'Documento da stampare assegnato', '500031', PE, { d: J, i: '-210,00', a: '212,00', c: '212,00', t: 'D' }),
  G2('2017 - Nº 380 del 15/12/16 - Fino a concorrenza importo (01/01/17 - 31/12/17) - NA', '0,00', '0,00', '0,00'),
  D('semi', 'y', 'Dichiarazione', '500031', PE, { i: '30.000,00' }),
  D('bold', '', 'Residuo', '500031', PE, { i: '30.000,00' }),
  G1('00251170239 ISCOM S.P.A.', '15.032,69', '2.112,00', '17.144,69'),
  G2('2017 - Nº 44 del 22/12/16 - Fino a concorrenza importo (01/01/17 - 31/12/17) - NA', '5.432,69', '0,00', '5.432,69'),
  D('semi', 'y', 'Dichiarazione', '500189', IS, { i: '30.000,00' }),
  D('hl', 'two', 'Documento da contabilizzare assegnato', '500189', IS, { d: J, i: '-5.430,69', n: '170001280', a: '5.432,69', c: '5.432,69', t: 'D' }),
  D('bold', '', 'Residuo', '500189', IS, { i: '24.569,31', p: '18,10%' }),
  G2('9999 - &nbsp;Documenti non assegnati', '9.600,00', '2.112,00', '11.712,00'),
  D('', '', 'Registrazione non assegnabile', '500189', IS, { d: J, i: '-9.600,00', n: '170000826', a: '9.600,00', b: '2.112,00', c: '11.712,00', r: '1000354567' }),
  D('bold', '', 'Totale non assegnato', '500189', IS, { i: '-9.600,00' }),
  G1('00291210177 ' + RA, '1.921,92', '0,00', '1.921,92'),
  G2('2017 - Nº 000075 del 03/12/16 - Di un periodo (01/01/17 - 28/02/17) - NA N.I. art. 8', '0,00', '0,00', '0,00'),
  D('semi', 'y', 'Dichiarazione', '100521', RA),
  G2('2017 - Nº 000076 del 01/12/16 - Fino a concorrenza importo (01/01/17 - 31/12/17)', '1.921,92', '0,00', '1.921,92'),
  D('semi', 'y', 'Dichiarazione', '100521', RA, { i: '10.000,00' }),
  D('', 'dark', 'Registrazione assegnata', '100521', RA, { d: J, i: '-1.921,92', n: '170000270', a: '1.921,92', c: '1.921,92', r: '1000354011' }),
  D('bold', '', 'Residuo', '100521', RA, { i: '8.078,08', p: '19,22%' }),
  G1('00293920179 G.M.P. SPA', '2.823,30', '621,13', '3.444,43')
].join('');
```
